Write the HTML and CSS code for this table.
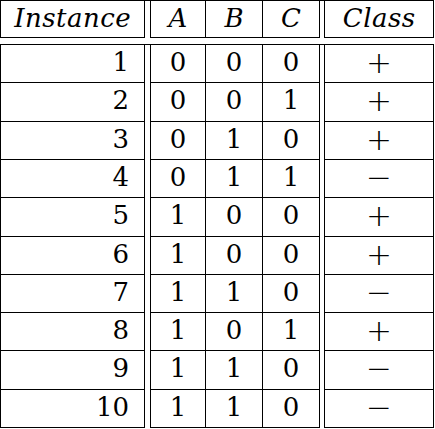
FILE: index.html
```html
<!DOCTYPE html>
<html>
<head>
<meta charset="utf-8">
<link rel="stylesheet" href="styles.css">
</head>
<body>
<div class="sheet">
  <div class="grid head">
    <div class="cell inst hd"><span class="it">Instance</span></div>
    <div class="cell a hd"><span class="it">A</span></div>
    <div class="cell hd"><span class="it">B</span></div>
    <div class="cell c hd"><span class="it">C</span></div>
    <div class="cell cls hd"><span class="it">Class</span></div>
  </div>
  <div class="grid body">
    <div class="cell inst num">1</div><div class="cell a">0</div><div class="cell">0</div><div class="cell c">0</div><div class="cell cls"><span class="sym">+</span></div>
    <div class="cell inst num">2</div><div class="cell a">0</div><div class="cell">0</div><div class="cell c">1</div><div class="cell cls"><span class="sym">+</span></div>
    <div class="cell inst num">3</div><div class="cell a">0</div><div class="cell">1</div><div class="cell c">0</div><div class="cell cls"><span class="sym">+</span></div>
    <div class="cell inst num">4</div><div class="cell a">0</div><div class="cell">1</div><div class="cell c">1</div><div class="cell cls"><span class="sym">−</span></div>
    <div class="cell inst num">5</div><div class="cell a">1</div><div class="cell">0</div><div class="cell c">0</div><div class="cell cls"><span class="sym">+</span></div>
    <div class="cell inst num">6</div><div class="cell a">1</div><div class="cell">0</div><div class="cell c">0</div><div class="cell cls"><span class="sym">+</span></div>
    <div class="cell inst num">7</div><div class="cell a">1</div><div class="cell">1</div><div class="cell c">0</div><div class="cell cls"><span class="sym">−</span></div>
    <div class="cell inst num">8</div><div class="cell a">1</div><div class="cell">0</div><div class="cell c">1</div><div class="cell cls"><span class="sym">+</span></div>
    <div class="cell inst num">9</div><div class="cell a">1</div><div class="cell">1</div><div class="cell c">0</div><div class="cell cls"><span class="sym">−</span></div>
    <div class="cell inst num">10</div><div class="cell a">1</div><div class="cell">1</div><div class="cell c">0</div><div class="cell cls"><span class="sym">−</span></div>
  </div>
</div>
</body>
</html>
```
FILE: styles.css
```css
html, body {
  margin: 0;
  padding: 0;
  background: #fff;
}
body {
  color: #000;
  width: 435px;
  height: 429px;
  overflow: hidden;
}
.sheet {
  display: flex;
  flex-direction: column;
  gap: 6px;
}
.grid {
  display: grid;
  grid-template-columns: 149px 56px 57px 61px 110px;
  border-top: 1px solid #000;
  border-left: 1px solid #000;
  width: 434px;
  box-sizing: border-box;
}
.head {
  grid-template-rows: 37px;
}
.body {
  grid-template-rows: 38px 39px 38px 38px 39px 38px 38px 38px 39px 38px;
}
.cell {
  box-sizing: border-box;
  border-right: 1px solid #000;
  border-bottom: 1px solid #000;
  display: flex;
  align-items: center;
  justify-content: center;
  font-family: "DejaVu Serif", serif;
  font-size: 26px;
  line-height: 1;
  padding-bottom: 4px;
}
.inst {
  margin-right: 5px;
}
.a, .cls {
  border-left: 1px solid #000;
}
.c {
  margin-right: 4px;
}
.num {
  justify-content: flex-end;
  padding-right: 15px;
}
.hd {
  font-size: 26px;
  padding-bottom: 3px;
}
.it {
  font-style: italic;
  letter-spacing: 0.5px;
  margin-right: -0.5px;
}
.sym {
  font-family: "DejaVu Sans", sans-serif;
  font-weight: 200;
  font-size: 31px;
  line-height: 26px;
}
```
